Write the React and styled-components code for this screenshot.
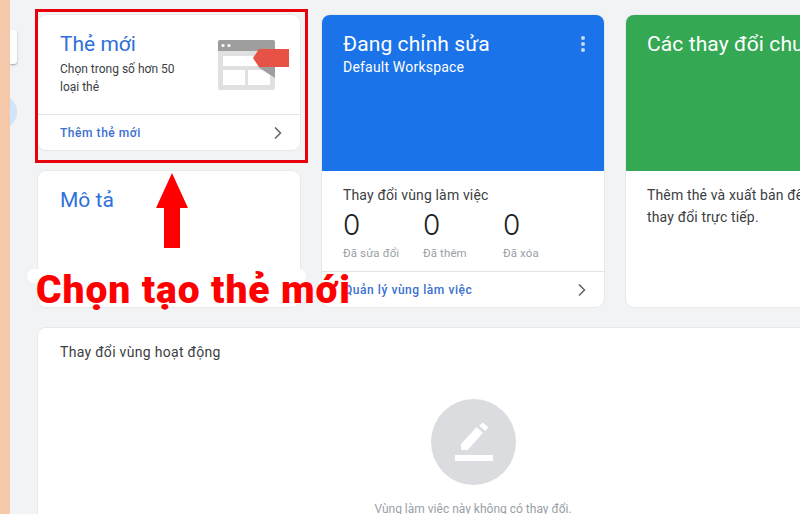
import React from "react";
import styled, { createGlobalStyle } from "styled-components";

const GlobalStyle = createGlobalStyle`
  html, body {
    margin: 0;
    padding: 0;
    height: 100%;
    overflow: hidden;
    background: #f1f3f4;
  }
  * {
    box-sizing: border-box;
  }
`;

function Chevron() {
  return (
    <ChevronIcon viewBox="0 0 10 14">
      <path d="M2 1.5 L7.5 7 L2 12.5" fill="none" stroke="#5f6368" strokeWidth="1.5" />
    </ChevronIcon>
  );
}

function TagPicture() {
  return (
    <TagSvg viewBox="0 0 71 50">
      <rect x="0" y="0" width="57" height="50" rx="2" fill="#e0e0e0" />
      <path d="M0 11 V2 a2 2 0 0 1 2 -2 H55 a2 2 0 0 1 2 2 V11 Z" fill="#9e9e9e" />
      <circle cx="5" cy="5.5" r="1.6" fill="#fff" />
      <circle cx="11" cy="5.5" r="1.6" fill="#fff" />
      <rect x="5" y="16" width="47" height="10" fill="#fff" />
      <rect x="5" y="30" width="22" height="15" fill="#fff" />
      <rect x="30" y="30" width="22" height="15" fill="#fff" />
      <path d="M40 27 H57 V38 Z" fill="#9e9e9e" />
      <path d="M41 9 H71 V27 H41 L35 18 Z" fill="#e65245" />
    </TagSvg>
  );
}

function PenIcon() {
  return (
    <PenSvg viewBox="0 0 85 86">
      <path d="M30 45 L45.5 28.3 L52 33.7 L36.7 51 H30 Z" fill="#fff" />
      <path d="M48 26.3 L52 23.7 L57.3 28.3 L54.3 32 Z" fill="#fff" />
      <rect x="24" y="56" width="38" height="6" fill="#fff" />
    </PenSvg>
  );
}

export default function App() {
  return (
    <Page>
      <GlobalStyle />
      <Strip />
      <Rail>
        <RailTab />
        <RailDot />
      </Rail>
      <Board>
        <LeftColumn>
          <NewTagCard>
            <NewTagBody>
              <div>
                <CardTitle>Thẻ mới</CardTitle>
                <Description>
                  Chọn trong số hơn 50
                  <br />
                  loại thẻ
                </Description>
              </div>
              <TagPicture />
            </NewTagBody>
            <CardFooter>
              <FooterLink>Thêm thẻ mới</FooterLink>
              <Chevron />
            </CardFooter>
          </NewTagCard>
          <DescriptionCard>
            <CardTitle>Mô tả</CardTitle>
          </DescriptionCard>
        </LeftColumn>

        <Card>
          <ColorHead $color="#1a73e8">
            <div>
              <HeadTitle>Đang chỉnh sửa</HeadTitle>
              <HeadSub>Default Workspace</HeadSub>
            </div>
            <Dots>
              <span />
              <span />
              <span />
            </Dots>
          </ColorHead>
          <StatsBody>
            <SectionLabel>Thay đổi vùng làm việc</SectionLabel>
            <Stats>
              <Stat>
                <StatNumber>0</StatNumber>
                <StatLabel>Đã sửa đổi</StatLabel>
              </Stat>
              <Stat>
                <StatNumber>0</StatNumber>
                <StatLabel>Đã thêm</StatLabel>
              </Stat>
              <Stat>
                <StatNumber>0</StatNumber>
                <StatLabel>Đã xóa</StatLabel>
              </Stat>
            </Stats>
          </StatsBody>
          <CardFooter>
            <FooterLink>Quản lý vùng làm việc</FooterLink>
            <Chevron />
          </CardFooter>
        </Card>

        <Card>
          <ColorHead $color="#34a853">
            <HeadTitle>Các thay đổi chưa xuất bản</HeadTitle>
          </ColorHead>
          <StatsBody>
            <SectionText>
              Thêm thẻ và xuất bản để xem các
              <br />
              thay đổi trực tiếp.
            </SectionText>
          </StatsBody>
        </Card>

        <ChangesCard>
          <ChangesTitle>Thay đổi vùng hoạt động</ChangesTitle>
          <EmptyState>
            <EmptyCircle>
              <PenIcon />
            </EmptyCircle>
            <EmptyText>Vùng làm việc này không có thay đổi.</EmptyText>
          </EmptyState>
        </ChangesCard>
      </Board>

      <RedFrame />
      <ArrowSvg viewBox="0 0 32 75">
        <path d="M16 0 L32 35 H24 V75 H8 V35 H0 Z" fill="#fe0000" />
      </ArrowSvg>
      <CaptionBand />
      <Caption>Chọn tạo thẻ mới</Caption>
    </Page>
  );
}

const Page = styled.div`
  position: relative;
  display: flex;
  width: 800px;
  height: 514px;
  overflow: hidden;
  background: #f1f3f4;
  font-family: Roboto, "Liberation Sans", sans-serif;
`;

const Strip = styled.div`
  flex: 0 0 10px;
  background: #f4c8a8;
`;

const Rail = styled.div`
  flex: 0 0 28px;
  overflow: hidden;
  padding: 30px 8px 0 0;
`;

const RailTab = styled.div`
  height: 34px;
  width: 7px;
  background: #fff;
  border-radius: 0 3px 3px 0;
  box-shadow: 0 1px 2px rgba(60, 64, 67, 0.45);
`;

const RailDot = styled.div`
  width: 34px;
  height: 34px;
  margin: 31px 0 0 -27px;
  border-radius: 50%;
  background: #d2e3fc;
`;

const Board = styled.div`
  flex: 0 0 870px;
  display: grid;
  grid-template-columns: 262px 282px 282px;
  grid-template-rows: 292px 300px;
  gap: 21px 22px;
  padding-top: 15px;
`;

const LeftColumn = styled.div`
  display: flex;
  flex-direction: column;
  gap: 21px;
`;

const Card = styled.div`
  display: flex;
  flex-direction: column;
  background: #fff;
  border-radius: 8px;
  overflow: hidden;
  box-shadow: 0 0 0 1px #e6e8ea;
`;

const NewTagCard = styled(Card)`
  flex: 0 0 135px;
`;

const NewTagBody = styled.div`
  flex: 1;
  display: flex;
  justify-content: space-between;
  padding: 16px 11px 0 22px;
`;

const CardTitle = styled.div`
  font-size: 21px;
  line-height: 26px;
  color: #2f6fd8;
  white-space: nowrap;
`;

const Description = styled.div`
  margin-top: 3px;
  font-size: 12px;
  line-height: 18px;
  color: #3c4043;
`;

const TagSvg = styled.svg`
  width: 71px;
  height: 50px;
  margin-top: 9px;
`;

const CardFooter = styled.div`
  flex: 0 0 36px;
  display: flex;
  align-items: center;
  justify-content: space-between;
  padding: 0 17px 0 22px;
  border-top: 1px solid #e0e3e6;
`;

const FooterLink = styled.div`
  font-size: 12px;
  font-weight: 500;
  letter-spacing: 0.55px;
  color: #3b6fd0;
`;

const ChevronIcon = styled.svg`
  width: 10px;
  height: 14px;
`;

const DescriptionCard = styled(Card)`
  flex: 0 0 136px;
  padding: 16px 22px;
`;

const ColorHead = styled.div`
  flex: 0 0 156px;
  display: flex;
  justify-content: space-between;
  padding: 16px 19px 0 21px;
  background: ${(props) => props.$color};
  color: #fff;
`;

const HeadTitle = styled.div`
  font-size: 21px;
  line-height: 26px;
  letter-spacing: 0.1px;
  white-space: nowrap;
`;

const HeadSub = styled.div`
  margin-top: 1px;
  font-size: 14px;
  line-height: 18px;
  letter-spacing: 0.2px;
`;

const Dots = styled.div`
  display: flex;
  flex-direction: column;
  gap: 2px;
  padding-top: 5px;

  span {
    display: block;
    width: 4px;
    height: 4px;
    border-radius: 50%;
    background: #c6dafc;
  }
`;

const StatsBody = styled.div`
  flex: 1;
  padding: 14px 21px 0;
`;

const SectionLabel = styled.div`
  font-size: 14px;
  line-height: 20px;
  letter-spacing: 0.15px;
  color: #3c4043;
  white-space: nowrap;
`;

const SectionText = styled(SectionLabel)`
  margin-top: -1px;
  line-height: 22px;
`;

const ChangesTitle = styled(SectionLabel)`
  letter-spacing: 0.3px;
`;

const Stats = styled.div`
  display: flex;
  margin-top: 4px;
`;

const Stat = styled.div`
  flex: 0 0 80px;
`;

const StatNumber = styled.div`
  font-family: Inter, Roboto, sans-serif;
  font-size: 28px;
  font-weight: 300;
  line-height: 32px;
  color: #202124;
`;

const StatLabel = styled.div`
  margin-top: 4px;
  font-size: 11.5px;
  line-height: 16px;
  letter-spacing: 0.1px;
  color: #9aa0a6;
`;

const ChangesCard = styled(Card)`
  grid-column: 1 / 4;
  padding: 14px 22px;
`;

const EmptyState = styled.div`
  display: flex;
  flex-direction: column;
  align-items: center;
  margin-top: 37px;
`;

const EmptyCircle = styled.div`
  width: 85px;
  height: 86px;
  border-radius: 50%;
  background: #dadce0;
`;

const PenSvg = styled.svg`
  display: block;
  width: 85px;
  height: 86px;
`;

const EmptyText = styled.div`
  margin-top: 16px;
  font-size: 12px;
  line-height: 16px;
  color: #9aa0a6;
`;

const RedFrame = styled.div`
  position: absolute;
  left: 35px;
  top: 9px;
  width: 273px;
  height: 154px;
  border: 3px solid #e8000c;
`;

const ArrowSvg = styled.svg`
  position: absolute;
  left: 156px;
  top: 173px;
  width: 32px;
  height: 75px;
`;

const CaptionBand = styled.div`
  position: absolute;
  left: 27px;
  top: 269px;
  width: 279px;
  height: 14px;
  border-radius: 7px;
  background: #fff;
`;

const Caption = styled.div`
  position: absolute;
  left: 36px;
  top: 268px;
  font-size: 39px;
  line-height: 44px;
  font-weight: 900;
  letter-spacing: 0.9px;
  color: #fe0000;
  white-space: nowrap;
`;
